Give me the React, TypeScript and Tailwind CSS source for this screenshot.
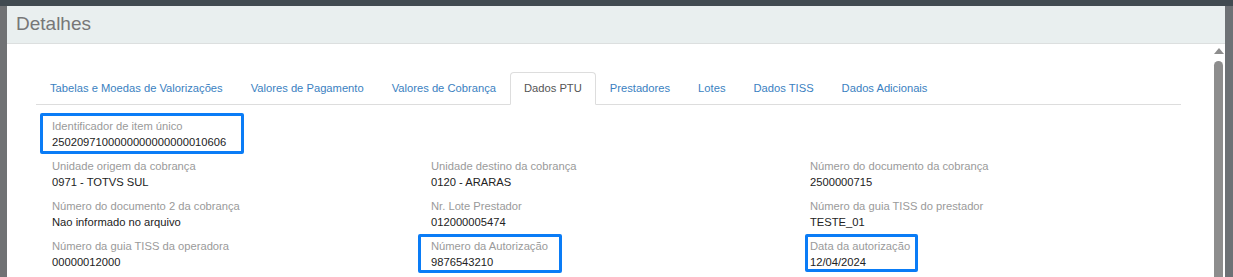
const tabs = [
  "Tabelas e Moedas de Valorizações",
  "Valores de Pagamento",
  "Valores de Cobrança",
  "Dados PTU",
  "Prestadores",
  "Lotes",
  "Dados TISS",
  "Dados Adicionais",
];

type Field = {
  label: string;
  value: string;
  mark?: string;
};

const rows: Field[][] = [
  [
    { label: "Unidade origem da cobrança", value: "0971 - TOTVS SUL" },
    { label: "Unidade destino da cobrança", value: "0120 - ARARAS" },
    { label: "Número do documento da cobrança", value: "2500000715" },
  ],
  [
    { label: "Número do documento 2 da cobrança", value: "Nao informado no arquivo" },
    { label: "Nr. Lote Prestador", value: "012000005474" },
    { label: "Número da guia TISS do prestador", value: "TESTE_01" },
  ],
  [
    { label: "Número da guia TISS da operadora", value: "00000012000" },
    {
      label: "Número da Autorização",
      value: "9876543210",
      mark: "left-[-13px] top-[-4px] w-[144px] h-[39px]",
    },
    {
      label: "Data da autorização",
      value: "12/04/2024",
      mark: "left-[-5px] top-[-4px] w-[113px] h-[38px]",
    },
  ],
];

function FieldItem({ f }: { f: Field }) {
  return (
    <div className="relative flex flex-col">
      <span className="text-[11.2px] leading-[16px] text-[#9a9a9a]">{f.label}</span>
      <span className="text-[11.2px] leading-[16px] text-[#222]">{f.value}</span>
      {f.mark && (
        <div
          className={`absolute ${f.mark} border-[3px] border-[#0a7cf6] rounded-[2px] pointer-events-none`}
        />
      )}
    </div>
  );
}

export default function App() {
  return (
    <div
      className="w-[1233px] h-[277px] overflow-hidden flex flex-col bg-[#6c7073]"
      style={{ fontFamily: '"Liberation Sans", Arial, sans-serif' }}
    >
      <div className="h-[6px] bg-[#414b51] shrink-0" />
      <div className="flex flex-1 min-h-0">
        <div className="w-[7px] shrink-0 bg-[#707274]" />
        <div className="w-[1218px] flex flex-col bg-white">
          <div className="h-[38px] shrink-0 bg-[#e9efef] border-b border-[#dcdfdf] flex items-center pl-[9px]">
            <span className="text-[19px] text-[#777]">Detalhes</span>
          </div>
          <div className="flex flex-1 min-h-0">
            <div className="flex-1 pl-[29px] pt-[28px]">
              <div className="w-[1145px] flex border-b border-[#ddd]">
                {tabs.map((t) => {
                  const active = t === "Dados PTU";
                  return (
                    <div
                      key={t}
                      className={`h-[33px] px-[13px] mb-[-1px] flex items-center text-[11.2px] whitespace-nowrap rounded-t-[4px] border ${
                        active
                          ? "border-[#ddd] border-b-white bg-white text-[#555]"
                          : "border-transparent text-[#3a7fc1]"
                      }`}
                    >
                      {t}
                    </div>
                  );
                })}
              </div>
              <div className="pl-[16px] pt-[13px] flex flex-col gap-[8px]">
                <div className="flex">
                  <div className="relative flex flex-col">
                    <span className="text-[11.2px] leading-[16px] text-[#9a9a9a]">
                      Identificador de item único
                    </span>
                    <span className="text-[11.2px] leading-[16px] text-[#222]">
                      2502097100000000000000010606
                    </span>
                    <div className="absolute left-[-12px] top-[-5px] w-[204px] h-[41px] border-[3px] border-[#0a7cf6] rounded-[2px]" />
                  </div>
                </div>
                {rows.map((r, i) => (
                  <div key={i} className="grid grid-cols-[379px_379px_379px]">
                    {r.map((f) => (
                      <FieldItem key={f.label} f={f} />
                    ))}
                  </div>
                ))}
              </div>
            </div>
            <div className="w-[11px] shrink-0 flex flex-col items-start pt-[4px]">
              <div className="w-[9px] flex justify-center">
                <div className="w-0 h-0 border-l-[5px] border-r-[5px] border-b-[6px] border-l-transparent border-r-transparent border-b-[#8d8d8d]" />
              </div>
              <div className="w-[9px] flex-1 mt-[7px] rounded-t-full bg-[#8d8d8d]" />
            </div>
          </div>
        </div>
        <div className="flex-1 bg-[#6d7175]" />
      </div>
    </div>
  );
}
